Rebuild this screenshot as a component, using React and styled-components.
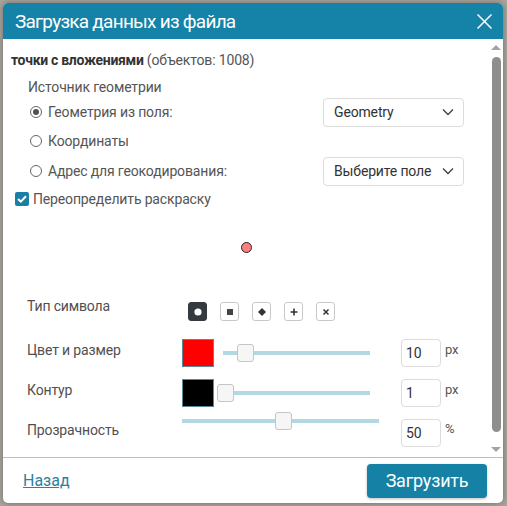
import React from "react";
import styled, { createGlobalStyle } from "styled-components";

const GlobalStyle = createGlobalStyle`
  html, body {
    margin: 0;
    padding: 0;
    background: #a9a59c;
  }
  body {
    font-family: Roboto, "Liberation Sans", Arial, sans-serif;
    color: #4a4a4a;
  }
  * {
    box-sizing: border-box;
  }
`;

const Page = styled.div`
  padding: 3px;
`;

const Dialog = styled.div`
  width: 500px;
  height: 500px;
  display: flex;
  flex-direction: column;
  background: #fff;
  border-radius: 5px;
  overflow: hidden;
  box-shadow: 0 0 6px rgba(0, 0, 0, 0.35);
`;

const Header = styled.div`
  height: 36px;
  flex: none;
  display: flex;
  align-items: center;
  justify-content: space-between;
  padding: 0 11px 0 12px;
  background: #1582a7;
  color: #fff;
`;

const Title = styled.h1`
  margin: 0;
  font-size: 19px;
  font-weight: 400;
  letter-spacing: -0.75px;
`;

const CloseButton = styled.button`
  width: 15px;
  height: 15px;
  padding: 0;
  border: 0;
  background: none;
  display: flex;
  cursor: pointer;
`;

const Body = styled.div`
  height: 418px;
  flex: none;
  display: flex;
`;

const Content = styled.div`
  flex: 1;
  padding: 11px 26px 0 8px;
  font-size: 14px;
  letter-spacing: -0.15px;
`;

const LayerName = styled.div`
  line-height: 20px;
  color: #555;

  b {
    color: #333;
    font-weight: 700;
    letter-spacing: -0.3px;
  }
`;

const Group = styled.div`
  padding-left: 17px;
  margin-top: 7px;
`;

const GroupTitle = styled.div`
  line-height: 20px;
  color: #555;
`;

const OptionRow = styled.div`
  height: ${(p) => p.$h}px;
  display: flex;
  align-items: center;
  justify-content: space-between;
  padding-left: 2px;
`;

const RadioLabel = styled.label`
  display: flex;
  align-items: center;
  gap: 6px;
  color: #555;
`;

const Radio = styled.span`
  width: 12px;
  height: 12px;
  border-radius: 50%;
  border: 1px solid #666;
  display: flex;
  align-items: center;
  justify-content: center;

  &::after {
    content: "";
    width: 6px;
    height: 6px;
    border-radius: 50%;
    background: ${(p) => (p.$checked ? "#505050" : "transparent")};
  }
`;

const Select = styled.div`
  width: 141px;
  height: 29px;
  display: flex;
  align-items: center;
  justify-content: space-between;
  padding: 0 9px 0 10px;
  border: 1px solid #dcdcdc;
  border-radius: 4px;
  color: #333;
`;

const CheckRow = styled.label`
  height: 24px;
  display: flex;
  align-items: center;
  gap: 4px;
  padding-left: 4px;
  color: #555;
`;

const CheckBox = styled.span`
  width: 14px;
  height: 14px;
  border-radius: 2px;
  background: #1a7fa6;
  display: flex;
  align-items: center;
  justify-content: center;
`;

const Preview = styled.div`
  height: 84px;
  margin: 0 -26px 0 -8px;
  padding-top: 31px;
  display: flex;
  justify-content: center;
`;

const Dot = styled.span`
  width: 11px;
  height: 11px;
  border-radius: 50%;
  background: rgba(255, 0, 0, 0.5);
  border: 1px solid #222;
`;

const PropRow = styled.div`
  display: grid;
  grid-template-columns: 155px 219px 40px auto;
  align-items: center;
  padding-left: 16px;
  margin-bottom: 12px;
  min-height: ${(p) => p.$h || 28}px;
`;

const PropLabel = styled.div`
  align-self: start;
  line-height: 20px;
  padding-top: ${(p) => p.$top || 1}px;
  color: #505050;
`;

const Controls = styled.div`
  display: flex;
  align-items: center;
  align-self: start;
  gap: ${(p) => p.$gap || 0}px;
  padding-left: ${(p) => p.$pad || 0}px;
  padding-top: ${(p) => p.$top || 0}px;
`;

const SymbolButton = styled.button`
  width: 19px;
  height: 19px;
  padding: 0;
  border-radius: 3px;
  border: 1px solid ${(p) => (p.$active ? "#343a40" : "#c8c8c8")};
  background: ${(p) => (p.$active ? "#343a40" : "#fff")};
  display: flex;
  align-items: center;
  justify-content: center;
  cursor: pointer;
`;

const Swatch = styled.span`
  width: 32px;
  height: 28px;
  flex: none;
  background: ${(p) => p.$color};
  border: 1px solid #5b8796;
`;

const Track = styled.div`
  position: relative;
  width: ${(p) => p.$width}px;
  height: 4px;
  margin-left: ${(p) => p.$offset || 0}px;
  background: #b2d8e4;
`;

const Thumb = styled.span`
  position: absolute;
  top: -7px;
  width: 17px;
  height: 18px;
  background: #f6f6f6;
  border: 1px solid #c5c5c5;
  border-radius: 3px;
`;

const NumberInput = styled.input`
  width: 40px;
  height: 28px;
  padding: 0 0 0 4px;
  border: 1px solid #dcdcdc;
  border-radius: 4px;
  font: inherit;
  font-size: 14px;
  color: #333;
  outline: none;
`;

const Unit = styled.span`
  align-self: start;
  padding-left: 4px;
  padding-top: ${(p) => p.$top || 1}px;
  line-height: 20px;
  color: #555;
  font-size: 13px;
`;

const ScrollBar = styled.div`
  width: 13px;
  flex: none;
  display: flex;
  flex-direction: column;
  align-items: flex-start;
  padding: 6px 0 0 1px;
`;

const Arrow = styled.span`
  width: 0;
  height: 0;
  border-left: 5px solid transparent;
  border-right: 5px solid transparent;
  ${(p) =>
    p.$down
      ? "border-top: 5px solid #a3a3a3; margin-top: 15px;"
      : "border-bottom: 5px solid #a3a3a3;"}
`;

const ScrollThumb = styled.span`
  width: 9px;
  height: 375px;
  margin: 7px 0 0 1px;
  border-radius: 5px;
  background: #8e8e8e;
`;

const Footer = styled.div`
  flex: 1;
  display: flex;
  align-items: center;
  justify-content: space-between;
  padding: 0 16px 0 20px;
  border-top: 1px solid #bdbdbd;
`;

const BackLink = styled.a`
  font-size: 16px;
  color: #2f7f9f;
  text-decoration: underline;
  cursor: pointer;
`;

const SubmitButton = styled.button`
  width: 120px;
  height: 34px;
  border: 0;
  border-radius: 4px;
  background: #1581a5;
  color: #fff;
  font-family: inherit;
  font-size: 18px;
  letter-spacing: -0.2px;
  box-shadow: 0 1px 3px rgba(0, 0, 0, 0.25);
  cursor: pointer;
`;

const Chevron = () => (
  <svg width="12" height="8" viewBox="0 0 12 8">
    <path d="M1 1.5 6 6.5 11 1.5" fill="none" stroke="#444" strokeWidth="1.4" />
  </svg>
);

const symbols = [
  { id: "circle", glyph: <circle cx="4" cy="4" r="3.6" fill="#fff" /> },
  { id: "square", glyph: <rect x="1" y="1" width="6" height="6" fill="#444" /> },
  { id: "diamond", glyph: <path d="M4 0 8 4 4 8 0 4Z" fill="#333" /> },
  { id: "cross", glyph: <path d="M4 0.5v7M0.5 4h7" stroke="#333" strokeWidth="1.6" /> },
  { id: "x", glyph: <path d="M1.5 1.5l5 5M6.5 1.5l-5 5" stroke="#333" strokeWidth="1.5" /> },
];

const Slider = ({ width, pct, offset }) => (
  <Track $width={width} $offset={offset}>
    <Thumb style={{ left: Math.round(width * pct) - 6 }} />
  </Track>
);

export default function App() {
  return (
    <Page>
      <GlobalStyle />
      <Dialog>
        <Header>
          <Title>Загрузка данных из файла</Title>
          <CloseButton aria-label="Закрыть">
            <svg width="15" height="15" viewBox="0 0 15 15">
              <path d="M0.5 0.5 14.5 14.5M14.5 0.5 0.5 14.5" stroke="#fff" strokeWidth="1.5" />
            </svg>
          </CloseButton>
        </Header>

        <Body>
          <Content>
            <LayerName>
              <b>точки с вложениями</b> (объектов: 1008)
            </LayerName>

            <Group>
              <GroupTitle>Источник геометрии</GroupTitle>
              <OptionRow $h={30}>
                <RadioLabel>
                  <Radio $checked />
                  Геометрия из поля:
                </RadioLabel>
                <Select>
                  Geometry
                  <Chevron />
                </Select>
              </OptionRow>
              <OptionRow $h={28}>
                <RadioLabel>
                  <Radio />
                  Координаты
                </RadioLabel>
              </OptionRow>
              <OptionRow $h={32}>
                <RadioLabel>
                  <Radio />
                  Адрес для геокодирования:
                </RadioLabel>
                <Select>
                  Выберите поле
                  <Chevron />
                </Select>
              </OptionRow>
            </Group>

            <CheckRow>
              <CheckBox>
                <svg width="10" height="8" viewBox="0 0 10 8">
                  <path d="M1 4 3.8 6.6 9 1.2" fill="none" stroke="#fff" strokeWidth="2" />
                </svg>
              </CheckBox>
              Переопределить раскраску
            </CheckRow>

            <Preview>
              <Dot />
            </Preview>

            <PropRow $h={32}>
              <PropLabel>Тип символа</PropLabel>
              <Controls $gap={13} $pad={6} $top={7}>
                {symbols.map((s, i) => (
                  <SymbolButton key={s.id} $active={i === 0}>
                    <svg width="8" height="8" viewBox="0 0 8 8">
                      {s.glyph}
                    </svg>
                  </SymbolButton>
                ))}
              </Controls>
            </PropRow>

            <PropRow>
              <PropLabel>Цвет и размер</PropLabel>
              <Controls>
                <Swatch $color="#ff0000" />
                <Slider width={147} pct={0.136} offset={9} />
              </Controls>
              <NumberInput defaultValue="10" />
              <Unit>px</Unit>
            </PropRow>

            <PropRow>
              <PropLabel>Контур</PropLabel>
              <Controls>
                <Swatch $color="#000000" />
                <Slider width={147} pct={0} offset={9} />
              </Controls>
              <NumberInput defaultValue="1" />
              <Unit>px</Unit>
            </PropRow>

            <PropRow>
              <PropLabel>Прозрачность</PropLabel>
              <Controls>
                <Slider width={197} pct={0.5} />
              </Controls>
              <NumberInput defaultValue="50" />
              <Unit $top={-1}>%</Unit>
            </PropRow>
          </Content>

          <ScrollBar>
            <Arrow />
            <ScrollThumb />
            <Arrow $down />
          </ScrollBar>
        </Body>

        <Footer>
          <BackLink>Назад</BackLink>
          <SubmitButton>Загрузить</SubmitButton>
        </Footer>
      </Dialog>
    </Page>
  );
}
